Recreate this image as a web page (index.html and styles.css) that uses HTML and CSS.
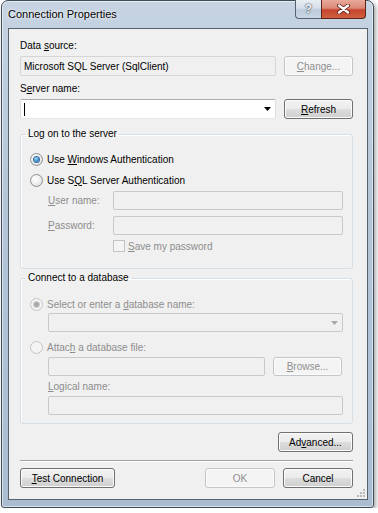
FILE: index.html
```html
<!DOCTYPE html>
<html lang="en">
<head>
    <meta charset="UTF-8">
    <meta name="viewport" content="width=device-width, initial-scale=1.0">
    <title>Connection Properties</title>
    <link rel="stylesheet" href="styles.css">
</head>
<body>
    <div class="window">
        <div class="titlebar">
            <span class="title">Connection Properties</span>
            <div class="caption">
                <div class="cap-btn cap-help">?</div>
                <div class="cap-btn cap-close">
                    <svg width="13" height="10" viewBox="0 0 13 10">
                        <path d="M2 1.5 L11 8.5 M11 1.5 L2 8.5" stroke="#5a1a10" stroke-width="4" stroke-linecap="round"/>
                        <path d="M2 1.5 L11 8.5 M11 1.5 L2 8.5" stroke="#ffffff" stroke-width="2.4" stroke-linecap="round"/>
                    </svg>
                </div>
            </div>
        </div>

        <div class="client">
            <div class="label">Data <u>s</u>ource:</div>
            <div class="row">
                <div class="field readonly">Microsoft SQL Server (SqlClient)</div>
                <button class="btn" disabled><u>C</u>hange...</button>
            </div>

            <div class="label label-gap">S<u>e</u>rver name:</div>
            <div class="row">
                <div class="field combo"><span class="caret"></span>
                    <svg class="arrow" width="7" height="4" viewBox="0 0 7 4"><path d="M0 0 H7 L3.5 4 Z" fill="#000"/></svg>
                </div>
                <button class="btn"><u>R</u>efresh</button>
            </div>

            <fieldset class="group group-logon">
                <legend>Log on to the server</legend>
                <div class="option">
                    <span class="radio on"></span><span>Use <u>W</u>indows Authentication</span>
                </div>
                <div class="option option-next">
                    <span class="radio"></span><span>Use S<u>Q</u>L Server Authentication</span>
                </div>
                <div class="creds">
                    <span class="muted"><u>U</u>ser name:</span>
                    <div class="field disabled"></div>
                    <span class="muted"><u>P</u>assword:</span>
                    <div class="field disabled"></div>
                    <span></span>
                    <div class="check-row muted"><span class="checkbox"></span><span><u>S</u>ave my password</span></div>
                </div>
            </fieldset>

            <fieldset class="group group-db">
                <legend>Connect to a database</legend>
                <div class="option muted">
                    <span class="radio on off"></span><span>Select or enter a <u>d</u>atabase name:</span>
                </div>
                <div class="indent">
                    <div class="field disabled combo">
                        <svg class="arrow" width="7" height="4" viewBox="0 0 7 4"><path d="M0 0 H7 L3.5 4 Z" fill="#a8a8a8"/></svg>
                    </div>
                </div>
                <div class="option option-attach muted">
                    <span class="radio off"></span><span>Attac<u>h</u> a database file:</span>
                </div>
                <div class="indent row">
                    <div class="field disabled"></div>
                    <button class="btn btn-browse" disabled><u>B</u>rowse...</button>
                </div>
                <div class="indent muted logical"><u>L</u>ogical name:</div>
                <div class="indent logical-field">
                    <div class="field disabled"></div>
                </div>
            </fieldset>

            <div class="advanced-row">
                <button class="btn btn-advanced">Ad<u>v</u>anced...</button>
            </div>

            <div class="separator"></div>

            <div class="footer">
                <button class="btn btn-test"><u>T</u>est Connection</button>
                <div class="footer-right">
                    <button class="btn" disabled>OK</button>
                    <button class="btn">Cancel</button>
                </div>
            </div>

            <svg class="grip" width="8" height="8" viewBox="0 0 8 8">
                <rect x="6" y="0" width="2" height="2" fill="#b9b9b9"/>
                <rect x="3" y="3" width="2" height="2" fill="#b9b9b9"/>
                <rect x="6" y="3" width="2" height="2" fill="#b9b9b9"/>
                <rect x="0" y="6" width="2" height="2" fill="#b9b9b9"/>
                <rect x="3" y="6" width="2" height="2" fill="#b9b9b9"/>
                <rect x="6" y="6" width="2" height="2" fill="#b9b9b9"/>
            </svg>
        </div>
    </div>
</body>
</html>
```

FILE: styles.css
```css
* {
    box-sizing: border-box;
    margin: 0;
    padding: 0;
}

body {
    background-color: #ffffff;
    font-family: 'Liberation Sans', Arial, sans-serif;
    font-size: 10px;
    color: #000;
}

u {
    text-decoration: underline;
    text-underline-offset: 1px;
}

/* window frame */

.window {
    width: 373px;
    height: 508px;
    margin-left: 1px;
    padding: 0 5px 5px 6px;
    border: 1px solid #3f4c5a;
    border-radius: 7px 7px 3px 3px;
    background: linear-gradient(to bottom, #c5d3e2 0%, #b4c5d8 40%, #a9bcd0 100%);
    box-shadow: inset 0 0 0 1px rgba(255, 255, 255, 0.55), 2px 2px 4px rgba(0, 0, 0, 0.35);
}

.titlebar {
    height: 27px;
    display: flex;
    align-items: flex-start;
}

.title {
    margin-top: 7px;
    font-size: 11px;
    color: #000;
    text-shadow: 0 0 5px rgba(255, 255, 255, 0.95), 0 0 2px rgba(255, 255, 255, 0.9);
}

.caption {
    margin-left: auto;
    margin-right: 2px;
    margin-top: -1px;
    display: flex;
}

.cap-btn {
    height: 19px;
    display: flex;
    align-items: center;
    justify-content: center;
    border: 1px solid #56626f;
    border-top: none;
}

.cap-help {
    width: 26px;
    border-right: none;
    border-radius: 0 0 0 4px;
    background: linear-gradient(to bottom, #e9eef4 0%, #d6dfe9 45%, #bccbdb 55%, #c9d6e3 100%);
    color: #f4f6f8;
    font-weight: bold;
    font-size: 12px;
    text-shadow: 0 0 1px #3c4650, 0 0 2px #3c4650;
}

.cap-close {
    width: 45px;
    border-color: #5b241a;
    border-radius: 0 0 4px 0;
    background: linear-gradient(to bottom, #e8a899 0%, #dc8a78 45%, #c7452f 55%, #d0603f 100%);
}

.client {
    position: relative;
    border: 1px solid #56636f;
    background-color: #f0f0f0;
    padding: 10px 14px 11px 11px;
}

/* generic controls */

.label {
    height: 14px;
    line-height: 14px;
    margin-bottom: 3px;
}

.label-gap {
    margin-top: 6px;
}

.row {
    display: flex;
    gap: 8px;
}

.field {
    flex: 1;
    height: 20px;
    background-color: #fff;
    border: 1px solid #abadb3;
    border-left-color: #dbdfe6;
    border-right-color: #dbdfe6;
    border-bottom-color: #e3e9ef;
    border-radius: 2px;
    display: flex;
    align-items: center;
    padding-left: 3px;
}

.field.readonly {
    background-color: #f0f0f0;
    border-color: #d5d5d5;
}

.field.disabled {
    background-color: #f0f0f0;
    border-color: #c9c9c9;
    height: 19px;
}

.combo {
    position: relative;
}

.caret {
    width: 1px;
    height: 13px;
    background-color: #000;
}

.arrow {
    margin-left: auto;
    margin-right: 4px;
}

.btn {
    width: 69px;
    height: 20px;
    font-family: inherit;
    font-size: 10px;
    color: #000;
    border: 1px solid #707070;
    border-radius: 3px;
    background: linear-gradient(to bottom, #f2f2f2 0%, #ebebeb 48%, #dddddd 52%, #cfcfcf 100%);
    box-shadow: inset 0 0 0 1px #fbfbfb;
}

.btn:disabled {
    color: #8f8f8f;
    border-color: #c3c6c8;
    background: #f4f4f4;
    box-shadow: inset 0 0 0 1px #fcfcfc;
}

/* group boxes */

.group {
    border: 1px solid #d5dfe5;
    border-radius: 3px;
    box-shadow: inset 1px 1px 0 #fff;
    padding: 8px 9px 15px 9px;
    min-inline-size: auto;
}

.group legend {
    line-height: 14px;
    padding: 0 2px;
    margin-left: -4px;
}

.group-logon {
    margin-top: 8px;
}

.group-db {
    margin-top: 2px;
    padding-top: 10px;
    padding-bottom: 8px;
}

.option {
    height: 20px;
    display: flex;
    align-items: center;
    gap: 4px;
}

.option-next {
    margin-top: 1px;
}

.group-db .option {
    height: 18px;
}

.option-attach {
    margin-top: 6px;
    margin-bottom: 1px;
}

.muted {
    color: #8d8d8d;
}

.radio {
    width: 13px;
    height: 13px;
    border-radius: 50%;
    border: 1px solid #8e8f8f;
    background: radial-gradient(circle at 40% 35%, #ffffff 0%, #eeeeee 50%, #d5d5d5 100%);
    display: flex;
    align-items: center;
    justify-content: center;
}

.radio.on::after {
    content: '';
    width: 5px;
    height: 5px;
    border-radius: 50%;
    background: radial-gradient(circle at 40% 35%, #9fdcfb 0%, #2f86c9 60%, #1c4f8a 100%);
    box-shadow: 0 0 0 1px #3a6d9f;
}

.radio.off {
    border-color: #c4c4c4;
    background: #f4f4f4;
}

.radio.on.off::after {
    background: #a9a9a9;
    box-shadow: 0 0 0 1px #cfcfcf;
}

.creds {
    margin-top: 1px;
    margin-left: 18px;
    display: grid;
    grid-template-columns: 65px 1fr;
    row-gap: 6px;
    align-items: center;
}

.creds .field.disabled {
    height: 19px;
}

.check-row {
    margin-top: -2px;
    height: 14px;
    display: flex;
    align-items: center;
    gap: 3px;
}

.checkbox {
    width: 12px;
    height: 12px;
    border: 1px solid #c4c4c4;
    background-color: #f4f4f4;
}

.indent {
    margin-left: 18px;
}

.btn-browse {
    margin-right: 1px;
    height: 19px;
}

.logical {
    margin-top: 4px;
    height: 14px;
    line-height: 14px;
}

.logical-field {
    margin-top: 2px;
    display: flex;
}

/* bottom buttons */

.advanced-row {
    margin-top: 8px;
    display: flex;
    justify-content: flex-end;
}

.btn-advanced {
    width: 75px;
}

.separator {
    margin-top: 8px;
    height: 2px;
    border-top: 1px solid #a0a0a0;
    border-bottom: 1px solid #ffffff;
}

.footer {
    margin-top: 6px;
    display: flex;
    justify-content: space-between;
}

.btn-test {
    width: 95px;
}

.footer-right {
    display: flex;
    gap: 8px;
}

.footer-right .btn {
    width: 70px;
}

.grip {
    position: absolute;
    right: 2px;
    bottom: 2px;
}
```
